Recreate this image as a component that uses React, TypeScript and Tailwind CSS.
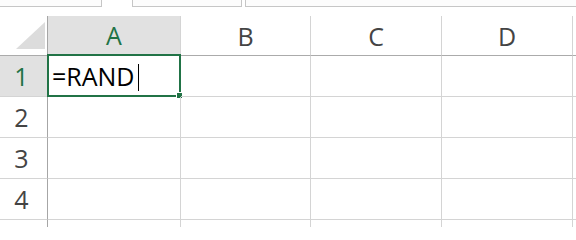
import React from "react";

const COLS = [
  { id: "A", w: "w-[133px]" },
  { id: "B", w: "w-[130px]" },
  { id: "C", w: "w-[131px]" },
  { id: "D", w: "w-[131px]" },
];

// row 5 only peeks in at the bottom edge, its label is out of view
const ROWS = [1, 2, 3, 4, 5];

const Corner = () => (
  <div className="relative w-[48px] shrink-0 border-r border-b border-r-[#a6a6a6] border-b-[#ababab] bg-white">
    <svg width="48" height="39" className="block">
      <polygon points="16,33 45,6 45,33" fill="#dcdcdc" />
    </svg>
  </div>
);

export default function App() {
  return (
    <div className="h-[227px] w-[576px] overflow-hidden bg-white font-['Open_Sans',sans-serif]">
      {/* name box / formula bar strip */}
      <div className="flex h-[7px]">
        <div className="w-[102px] border-r border-b border-[#c6c6c6] bg-[#fcfcfc]" />
        <div className="ml-[30px] w-[110px] border-x border-b border-[#c6c6c6] bg-[#fcfcfc]" />
        <div className="ml-[3px] flex-1 border-l border-b border-[#c6c6c6] bg-[#fcfcfc]" />
      </div>
      <div className="h-[9px]" />

      {/* column headers */}
      <div className="flex h-[40px]">
        <Corner />
        {COLS.map((c) => {
          const active = c.id === "A";
          return (
            <div
              key={c.id}
              className={`${c.w} flex shrink-0 items-end justify-center border-r border-b border-r-[#d4d4d4] pb-[3px] text-[25px] leading-[32px] ${
                active
                  ? "border-b-2 border-b-[#217346] bg-[#e1e1e1] text-[#217346]"
                  : "border-b-[#ababab] text-[#444444]"
              }`}
            >
              {c.id}
            </div>
          );
        })}
        <div className="flex-1 border-b border-b-[#ababab]" />
      </div>

      {/* rows */}
      {ROWS.map((r) => {
        const active = r === 1;
        return (
          <div key={r} className="flex h-[41px]">
            <div
              className={`flex w-[48px] shrink-0 items-center justify-center border-r border-b border-r-[#a6a6a6] border-b-[#d4d4d4] pr-[4px] pt-[1px] text-[25px] ${
                active ? "bg-[#e1e1e1] text-[#217346]" : "bg-white text-[#444444]"
              }`}
            >
              {r < 5 ? r : null}
            </div>
            {COLS.map((c) => (
              <div
                key={c.id}
                className={`${c.w} relative shrink-0 border-r border-b border-[#d4d4d4]`}
              >
                {active && c.id === "A" && (
                  <>
                    <div className="flex h-full items-center pl-[4px] pt-[2px] text-[25px] text-black">
                      <span>=RAND</span>
                      <span className="ml-[3px] h-[27px] w-px bg-black" />
                    </div>
                    <div className="absolute -top-[2px] -left-[1px] h-[43px] w-[134px] border-2 border-[#217346]">
                      <div className="absolute -right-[3px] -bottom-[3px] h-[6px] w-[6px] border-t border-l border-white bg-[#217346]" />
                    </div>
                  </>
                )}
              </div>
            ))}
            <div className="flex-1 border-b border-[#d4d4d4]" />
          </div>
        );
      })}
    </div>
  );
}
